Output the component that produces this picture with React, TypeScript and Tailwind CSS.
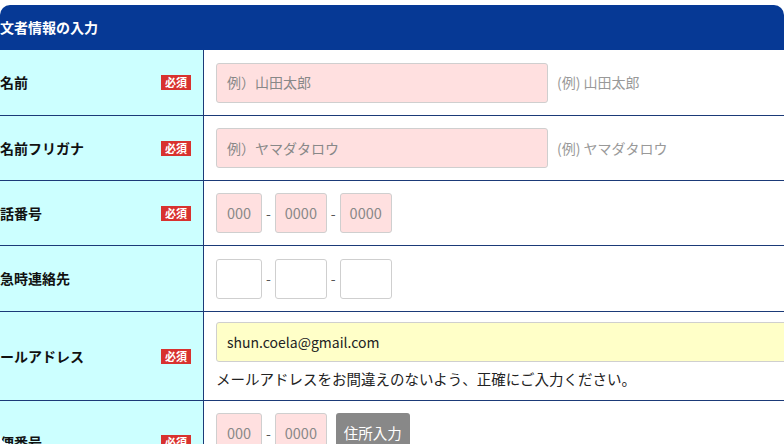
import type { ReactNode } from 'react';

const font = { fontFamily: '"Noto Sans CJK JP", "Noto Sans", sans-serif' };

type RowProps = {
  label: string;
  required?: boolean;
  height: string;
  children: ReactNode;
};

function Row({ label, required, height, children }: RowProps) {
  return (
    <div className={`flex border-b border-[#1b3a78] ${height}`}>
      <div className="flex w-[228px] shrink-0 items-center justify-between border-r border-[#1b3a78] bg-[#ccffff] pl-[10px] pr-[12px]">
        <span className="text-[14px] font-bold text-[#111]">{label}</span>
        {required && (
          <span className="bg-[#d8322f] px-[4px] py-[1px] text-[11px] font-bold leading-[13px] text-white">
            必須
          </span>
        )}
      </div>
      <div className="flex flex-1 flex-col justify-center pl-[12px]">{children}</div>
    </div>
  );
}

function Box({ w, text, tone }: { w: string; text?: string; tone: 'pink' | 'white' }) {
  return (
    <div
      className={`flex h-[40px] items-center justify-center rounded-[3px] border border-[#cfcfcf] text-[14.5px] text-[#888] ${w} ${
        tone === 'pink' ? 'bg-[#ffe0e0]' : 'bg-white'
      }`}
    >
      {text}
    </div>
  );
}

function Dash() {
  return <span className="mx-[4px] text-[14px] text-[#555]">-</span>;
}

export default function App() {
  return (
    <div className="h-[444px] w-[784px] overflow-hidden bg-white pt-[5px]" style={font}>
      <div className="h-[439px] overflow-hidden rounded-[10px]">
        {/* the shot is cropped on the left, so the first glyph of each label is cut */}
        <div className="-ml-[24px] w-[860px]">
          <div className="flex h-[45px] items-center bg-[#063995] pl-[10px] text-[14px] font-bold text-white">
            注文者情報の入力
          </div>

          <Row label="お名前" required height="h-[66px]">
            <div className="flex items-center">
              <div className="flex h-[40px] w-[332px] items-center rounded-[3px] border border-[#cfcfcf] bg-[#ffe0e0] pl-[10px] text-[14px] text-[#888]">
                例）山田太郎
              </div>
              <span className="ml-[9px] text-[14px] text-[#999]">(例) 山田太郎</span>
            </div>
          </Row>

          <Row label="お名前フリガナ" required height="h-[65px]">
            <div className="flex items-center">
              <div className="flex h-[40px] w-[332px] items-center rounded-[3px] border border-[#cfcfcf] bg-[#ffe0e0] pl-[10px] text-[14px] text-[#888]">
                例）ヤマダタロウ
              </div>
              <span className="ml-[9px] text-[14px] text-[#999]">(例) ヤマダタロウ</span>
            </div>
          </Row>

          <Row label="電話番号" required height="h-[65px]">
            <div className="flex items-center">
              <Box w="w-[46px]" text="000" tone="pink" />
              <Dash />
              <Box w="w-[52px]" text="0000" tone="pink" />
              <Dash />
              <Box w="w-[52px]" text="0000" tone="pink" />
            </div>
          </Row>

          <Row label="緊急時連絡先" height="h-[66px]">
            <div className="flex items-center">
              <Box w="w-[46px]" tone="white" />
              <Dash />
              <Box w="w-[52px]" tone="white" />
              <Dash />
              <Box w="w-[52px]" tone="white" />
            </div>
          </Row>

          <Row label="メールアドレス" required height="h-[89px]">
            <div className="flex h-[40px] items-center rounded-[3px] border border-[#cfcfcf] bg-[#ffffc8] pl-[10px] text-[14px] text-[#222]">
              shun.coela@gmail.com
            </div>
            <p className="mt-[6px] text-[14.5px] text-[#222]">
              メールアドレスをお間違えのないよう、正確にご入力ください。
            </p>
          </Row>

          <div className="flex h-[82px]">
            <div className="flex w-[228px] shrink-0 items-center justify-between border-r border-[#1b3a78] bg-[#ccffff] pl-[10px] pr-[12px]">
              <span className="text-[14px] font-bold text-[#111]">郵便番号</span>
              <span className="bg-[#d8322f] px-[4px] py-[1px] text-[11px] font-bold leading-[13px] text-white">
                必須
              </span>
            </div>
            <div className="flex flex-1 items-start pl-[12px] pt-[12px]">
              <div className="flex h-[40px] items-center">
                <Box w="w-[46px]" text="000" tone="pink" />
                <Dash />
                <Box w="w-[52px]" text="0000" tone="pink" />
                <button className="ml-[9px] h-[40px] w-[74px] rounded-[3px] bg-[#888] text-[14.5px] text-white">
                  住所入力
                </button>
              </div>
            </div>
          </div>
        </div>
      </div>
    </div>
  );
}
